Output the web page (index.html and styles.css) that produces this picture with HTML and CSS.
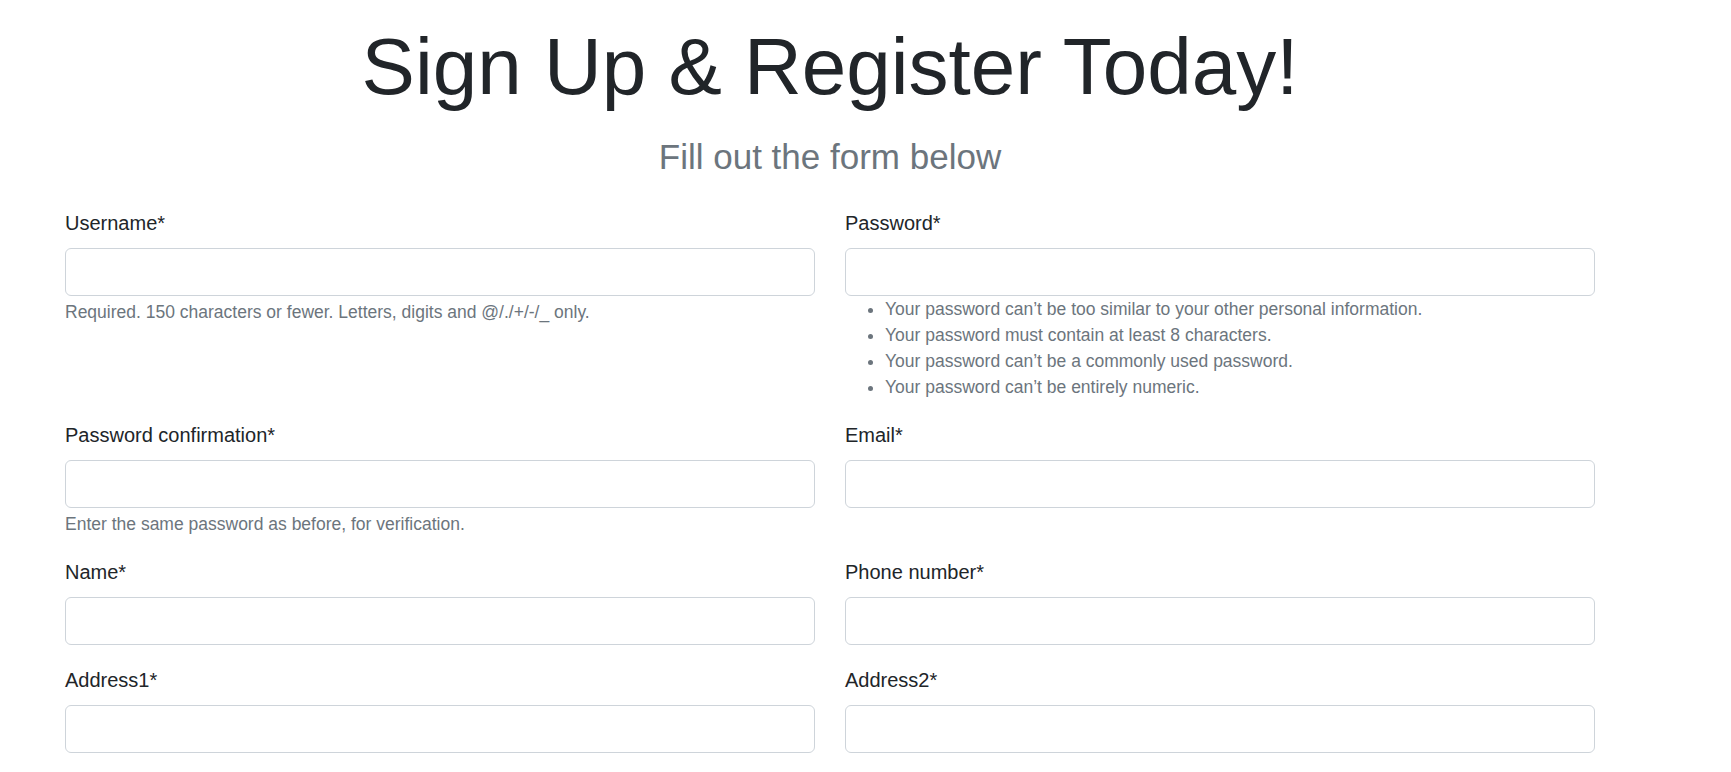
FILE: index.html
```html
<!DOCTYPE html>
<html lang="en">
<head>
<meta charset="utf-8">
<title>Sign Up</title>
<link rel="stylesheet" href="styles.css">
</head>
<body>
<main class="page">
  <header class="intro">
    <h1 class="title">Sign Up &amp; Register Today!</h1>
    <h3 class="subtitle">Fill out the form below</h3>
  </header>
  <form class="signup">
    <div class="field">
      <label class="field-label" for="username">Username*</label>
      <input class="field-input" id="username" type="text">
      <div class="field-help">Required. 150 characters or fewer. Letters, digits and @/./+/-/_ only.</div>
    </div>
    <div class="field">
      <label class="field-label" for="password1">Password*</label>
      <input class="field-input" id="password1" type="password">
      <div class="field-help field-help-list">
        <ul class="help-list">
          <li>Your password can’t be too similar to your other personal information.</li>
          <li>Your password must contain at least 8 characters.</li>
          <li>Your password can’t be a commonly used password.</li>
          <li>Your password can’t be entirely numeric.</li>
        </ul>
      </div>
    </div>
    <div class="field">
      <label class="field-label" for="password2">Password confirmation*</label>
      <input class="field-input" id="password2" type="password">
      <div class="field-help">Enter the same password as before, for verification.</div>
    </div>
    <div class="field">
      <label class="field-label" for="email">Email*</label>
      <input class="field-input" id="email" type="email">
    </div>
    <div class="field">
      <label class="field-label" for="name">Name*</label>
      <input class="field-input" id="name" type="text">
    </div>
    <div class="field">
      <label class="field-label" for="phone">Phone number*</label>
      <input class="field-input" id="phone" type="text">
    </div>
    <div class="field">
      <label class="field-label" for="address1">Address1*</label>
      <input class="field-input" id="address1" type="text">
    </div>
    <div class="field">
      <label class="field-label" for="address2">Address2*</label>
      <input class="field-input" id="address2" type="text">
    </div>
  </form>
</main>
</body>
</html>
```

FILE: styles.css
```css
html, body {
  margin: 0;
  padding: 0;
  background: #ffffff;
}

body {
  font-family: "Liberation Sans", Arial, sans-serif;
  color: #212529;
}

.page {
  width: 1530px;
  margin-left: 65px;
  padding-top: 19px;
}

.intro {
  text-align: center;
}

.title {
  margin: 0 0 21px;
  font-size: 80px;
  line-height: 96px;
  font-weight: 400;
  color: #212529;
}

.subtitle {
  margin: 0;
  font-size: 35px;
  line-height: 42px;
  font-weight: 400;
  color: #6c757d;
}

.signup {
  margin-top: 30px;
  display: grid;
  grid-template-columns: 750px 750px;
  column-gap: 30px;
  row-gap: 20px;
  align-items: start;
}

.field {
  display: flex;
  flex-direction: column;
}

.field-label {
  display: block;
  font-size: 20px;
  line-height: 30px;
  margin-bottom: 10px;
  color: #212529;
}

.field-input {
  display: block;
  box-sizing: border-box;
  width: 100%;
  height: 48px;
  margin: 0;
  padding: 7px 15px;
  border: 1px solid #ced4da;
  border-radius: 6px;
  background: #ffffff;
  font-family: inherit;
  font-size: 20px;
  color: #212529;
  outline: none;
}

.field-help {
  margin-top: 3px;
  font-size: 17.5px;
  line-height: 26px;
  color: #6c757d;
}

.field-help-list {
  margin-top: 0;
}

.help-list {
  margin: 0;
  padding-left: 40px;
}
```
